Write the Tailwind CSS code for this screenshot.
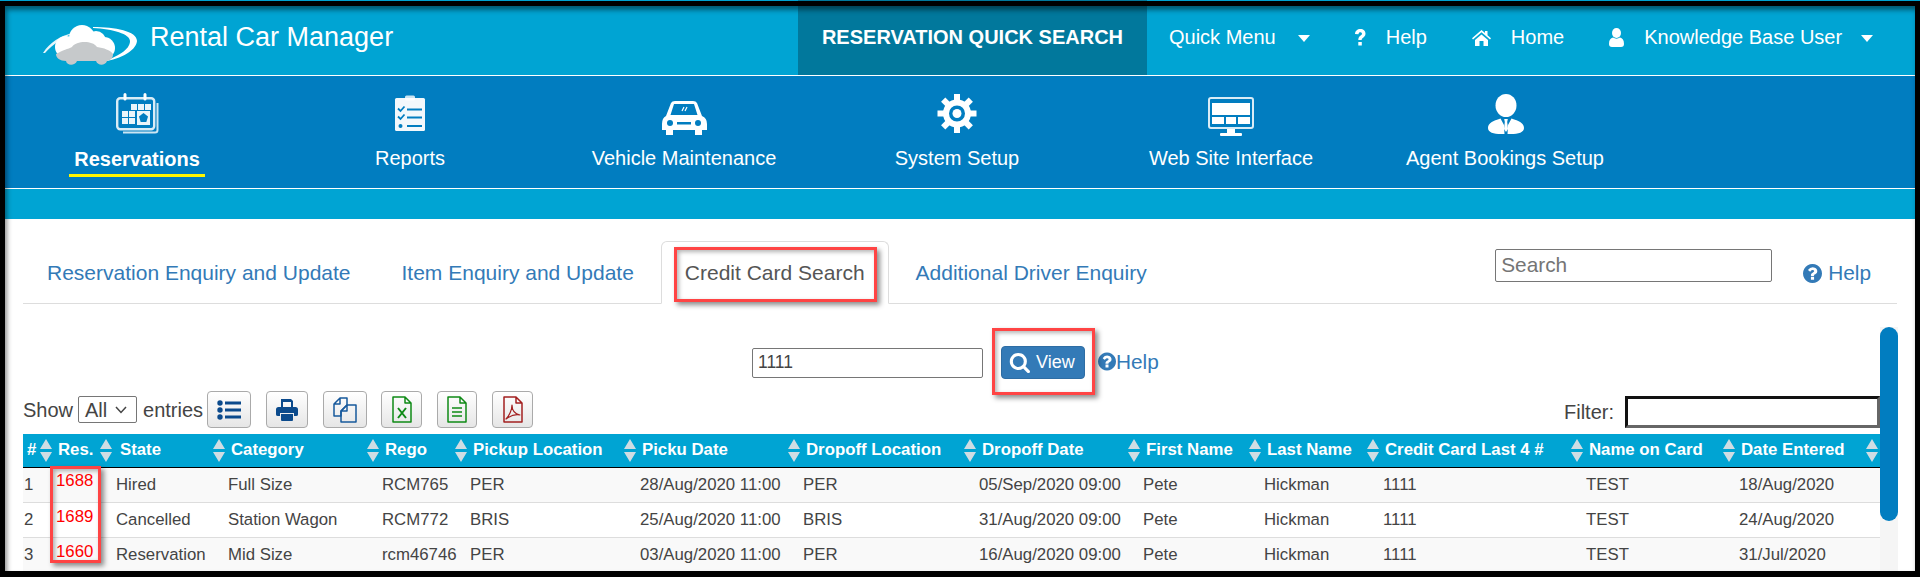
<!doctype html>
<html><head><meta charset="utf-8">
<script src="https://cdn.jsdelivr.net/npm/@tailwindcss/browser@4"></script>
</head>
<body class="bg-black overflow-hidden">
<div class="relative w-[1920px] h-[577px] bg-black font-['Liberation_Sans',Arial,sans-serif] overflow-hidden">
  <div class="h-px flex"><div class="w-[798px] bg-[#00a3d3]"></div><div class="w-[349px] bg-[#01789c]"></div><div class="flex-1 bg-[#00a3d3]"></div></div>
  <div class="ml-[5px] mr-[5px] mt-[5px] h-[565px] flex flex-col bg-white overflow-hidden relative">
    <!-- top bar -->
    <header class="h-[69px] shrink-0 bg-[#00a4d3] flex items-stretch text-white border-b border-white box-content">
      <div class="w-[145px] shrink-0 pl-[38px] pt-[19px]">
        <svg width="94" height="40" viewBox="0 0 94 40">
          <path d="M0 28 C7 17 17 11 30 8 C20 13 10 19 2 28 Z" fill="#fff" fill-opacity=".9"/>
          <path d="M50 2 C72 2 94 6 94 16 C93 27 74 35 58 37 C74 32 87 25 87 16 C87 9 70 4 50 3 Z" fill="#fff"/>
          <g fill="#fff"><circle cx="23" cy="22" r="11"/><circle cx="39" cy="13" r="13"/><circle cx="53" cy="16" r="10"/><circle cx="61" cy="23" r="11"/></g>
          <path d="M13 29 C20 25 25 24 29 22 C33 16 49 15 54 22 C61 23 67 25 70 29 C70 33 68 35 64 36 C62 41 55 41 53 36 L34 36 C32 41 24 41 23 36 C17 36 13 33 13 29 Z" fill="#c6c9cb"/>
        </svg>
      </div>
      <div class="w-[648px] shrink-0 text-[27px] leading-[32px] pt-[15px]">Rental Car Manager</div>
      <div class="w-[349px] shrink-0 bg-[#01789c] flex items-center justify-center font-bold text-[20px] pb-[7px]">RESERVATION QUICK SEARCH</div>
      <nav class="flex-1 flex items-center text-[20px] pb-[7px]">
        <span class="ml-[22px]">Quick Menu</span>
        <span class="ml-[22px] mt-[2px] w-0 h-0 border-x-[6px] border-x-transparent border-t-[7px] border-t-white"></span>
        <svg class="ml-[44px]" width="12" height="17" viewBox="0 0 11 17" fill="#fff"><path d="M0.500 5 C0.500 2 3 0 5.800 0 C9 0 11 2 11 4.800 C11 7 9.500 8 8.300 9 C7.300 9.800 7.200 10.300 7.200 11 L3.800 11 C3.800 9 4.300 8 5.500 7 C7 5.900 7.500 5.500 7.500 4.800 C7.500 3.800 6.800 3.200 5.800 3.200 C4.800 3.200 4.200 3.800 3.900 5.300 Z M3.800 13 H7.300 V16.500 H3.800 Z"/></svg>
        <span class="ml-[20px]">Help</span>
        <svg class="ml-[45px]" width="19" height="17" viewBox="0 0 19 17" fill="#fff"><path d="M9.500 1 L13 4 V2 H15.500 V6.200 L19 9.300 L18 10.500 L9.500 3.200 L1 10.500 L0 9.300 Z M3 11 L9.500 5.400 L16 11 V17 H11.500 V12 H7.500 V17 H3 Z"/></svg>
        <span class="ml-[20px]">Home</span>
        <svg class="ml-[45px]" width="15" height="19" viewBox="0 0 15 19" fill="#fff"><ellipse cx="7.500" cy="5" rx="4.500" ry="5"/><path d="M0 16 C0 12 1.500 10 4 9.500 C6 11 9 11 11 9.500 C13.500 10 15 12 15 16 C15 18 14 19 12 19 H3 C1 19 0 18 0 16 Z"/></svg>
        <span class="ml-[20px]">Knowledge Base User</span>
        <span class="ml-[19px] mt-[2px] w-0 h-0 border-x-[6px] border-x-transparent border-t-[7px] border-t-white"></span>
      </nav>
    </header>
    <!-- main menu -->
    <div class="h-[112px] shrink-0 bg-[#017dc0] border-b border-white box-content text-white text-[20px] flex">
      <div class="w-[264px] flex flex-col items-center">
        <svg class="mt-[16px]" width="50" height="46" viewBox="0 0 50 46" fill="none">
          <path d="M45.500 11 V38 A2.500 2.500 0 0 1 43 40.500 H11" stroke="#fff" stroke-opacity=".8" stroke-width="2"/>
          <rect x="5.200" y="6.200" width="37" height="31" rx="3" stroke="#fff" stroke-opacity=".85" stroke-width="2.400"/>
          <path d="M13 2.500 V7 M33 2.500 V7" stroke="#fff" stroke-width="3" stroke-linecap="round"/>
          <g fill="#fff" fill-opacity=".92"><rect x="19" y="12" width="6" height="6"/><rect x="26" y="12" width="6" height="6"/><rect x="33" y="12" width="6" height="6"/><rect x="10" y="19" width="6" height="6"/><rect x="17" y="19" width="6" height="6"/><rect x="10" y="26" width="6" height="6"/><rect x="17" y="26" width="6" height="6"/><rect x="25" y="19" width="13" height="14"/></g>
          <path d="M31.500 21 L36 24.500 L34.300 30 H28.700 L27 24.500 Z" fill="#017dc0"/>
        </svg>
        <div class="font-bold mt-[10px] leading-[22px]">Reservations</div>
        <div class="mt-[4px] w-[136px] h-[3px] bg-[#fff600]"></div>
      </div>
      <div class="w-[282px] flex flex-col items-center">
        <svg class="mt-[16px]" width="50" height="46" viewBox="0 0 50 46">
          <rect x="10" y="6" width="30" height="33" rx="1.500" fill="#fff" fill-opacity=".95"/>
          <rect x="20" y="3.500" width="10" height="5" rx="1.500" fill="#fff" fill-opacity=".8"/>
          <g stroke="#017dc0" stroke-width="1.800" fill="none"><path d="M22 17.500 H37 M22 25.500 H37 M22 34 H37"/><path d="M13 16.500 L15.500 19 L19.500 14.500 M13 24.500 L15.500 27 L19.500 22.500"/></g>
          <circle cx="15.500" cy="34" r="2" fill="#017dc0"/>
        </svg>
        <div class="mt-[9px] leading-[22px]">Reports</div>
      </div>
      <div class="w-[266px] flex flex-col items-center">
        <svg class="mt-[16px]" width="50" height="46" viewBox="0 0 50 46">
          <path fill="#fff" fill-rule="evenodd" d="M12 11 Q13 9 16 9 H34 Q37 9 38 11 L43 24 Q48 26 48 32 V38 H43 V43 H36 V38 H14 V43 H7 V38 H3 V32 Q3 26 7 24 Z M15 12 L11.500 23 H38.500 L35 12 Z"/>
          <path d="M23 19 L25 15 M26 19 L28 15" stroke="#fff" stroke-width="1.200"/>
          <circle cx="11" cy="31" r="3" fill="#017dc0"/><circle cx="39" cy="31" r="3" fill="#017dc0"/>
          <rect x="18" y="30" width="14" height="2.500" fill="#017dc0"/>
        </svg>
        <div class="mt-[9px] leading-[22px]">Vehicle Maintenance</div>
      </div>
      <div class="w-[280px] flex flex-col items-center">
        <svg class="mt-[16px]" width="50" height="46" viewBox="0 0 50 46">
          <g fill="#fff">
            <rect x="22" y="2" width="6" height="7"/><rect x="22" y="34" width="6" height="7"/>
            <rect x="22" y="2" width="6" height="7" transform="rotate(45 25 21.500)"/><rect x="22" y="34" width="6" height="7" transform="rotate(45 25 21.500)"/>
            <rect x="22" y="2" width="6" height="7" transform="rotate(90 25 21.500)"/><rect x="22" y="34" width="6" height="7" transform="rotate(90 25 21.500)"/>
            <rect x="22" y="2" width="6" height="7" transform="rotate(135 25 21.500)"/><rect x="22" y="34" width="6" height="7" transform="rotate(135 25 21.500)"/>
            <circle cx="25" cy="21.500" r="4.500"/>
          </g>
          <circle cx="25" cy="21.500" r="11" fill="none" stroke="#fff" stroke-width="6"/>
        </svg>
        <div class="mt-[9px] leading-[22px]">System Setup</div>
      </div>
      <div class="w-[268px] flex flex-col items-center">
        <svg class="mt-[16px]" width="50" height="46" viewBox="0 0 50 46">
          <rect x="3" y="6" width="44" height="30" rx="2" fill="none" stroke="#fff" stroke-opacity=".85" stroke-width="2"/>
          <g fill="#fff"><rect x="6" y="11" width="38" height="12"/><rect x="6" y="25" width="12" height="7"/><rect x="20" y="25" width="10" height="7"/><rect x="32" y="25" width="12" height="7"/><rect x="21" y="37" width="8" height="4"/><rect x="14" y="41" width="22" height="3" rx="1"/></g>
        </svg>
        <div class="mt-[9px] leading-[22px]">Web Site Interface</div>
      </div>
      <div class="w-[280px] flex flex-col items-center">
        <svg class="mt-[16px]" width="50" height="46" viewBox="0 0 50 46">
          <ellipse cx="26" cy="13.500" rx="10.500" ry="11.500" fill="#fff"/>
          <path d="M8 36 C8 31 13 29 20.500 26.500 L24 33 L24.500 42 C15 42.500 8 41 8 36 Z M44 36 C44 31 39 29 31.500 26.500 L28 33 L27.500 42 C37 42.500 44 41 44 36 Z" fill="#fff"/>
          <path d="M24.200 27 H27.800 L27.200 30 L28 37 L26 40 L24 37 L24.800 30 Z" fill="#fff"/>
        </svg>
        <div class="mt-[9px] leading-[22px]">Agent Bookings Setup</div>
      </div>
    </div>
    <div class="h-[30px] shrink-0 bg-[#00a4d3]"></div>
    <!-- content -->
    <main class="px-[18px] flex-1 text-[#444]">
      <div class="h-[85px] pt-[22px] border-b border-[#ddd] flex items-start text-[21px] text-[#337ab7]">
        <a class="h-[63px] px-[23px] mr-[3px] flex items-center border border-transparent whitespace-nowrap">Reservation Enquiry and Update</a>
        <a class="h-[63px] px-[23px] mr-[3px] flex items-center border border-transparent whitespace-nowrap">Item Enquiry and Update</a>
        <a class="h-[63px] px-[23px] mr-[3px] flex items-center border border-[#ddd] border-b-white rounded-t-[6px] text-[#555] whitespace-nowrap">Credit Card Search</a>
        <a class="h-[63px] px-[23px] flex items-center border border-transparent whitespace-nowrap">Additional Driver Enquiry</a>
        <div class="ml-auto flex items-start text-[20.8px]">
          <div class="mt-[8px] w-[277px] h-[33px] border border-[#767676] rounded-[2px] text-[#757575] pl-[5px] leading-[29px]">Search</div>
          <div class="ml-[31px] mr-[26px] mt-[20px] flex items-center leading-[24px]">
            <svg class="mr-[6px]" width="19" height="19" viewBox="0 128 1536 1536" fill="#337ab7"><path d="M896 1376v-192q0-14-9-23t-23-9h-192q-14 0-23 9t-9 23v192q0 14 9 23t23 9h192q14 0 23-9t9-23zm256-672q0-88-55.500-163t-138.500-116-170-41q-243 0-371 213-15 24 8 42l132 100q7 6 19 6 16 0 25-12 53-68 86-92 34-24 86-24 48 0 85.500 26t37.500 59q0 38-20 61t-68 45q-63 28-115.500 86.500t-52.500 125.500v36q0 14 9 23t23 9h192q14 0 23-9t9-23q0-19 21.500-49.500t54.500-49.500q32-18 49-28.500t46-35 44.500-48 28-60.500 12.500-81zm384 192q0 209-103 385.500t-279.500 279.500-385.500 103-385.500-103-279.500-279.500-103-385.500 103-385.500 279.500-279.500 385.500-103 385.500 103 279.500 279.500 103 385.500z"/></svg>
            <span>Help</span>
          </div>
        </div>
      </div>
      <div class="flex items-center ml-[729px] mt-[42px] h-[33px]">
        <div class="w-[231px] h-[30px] border border-[#767676] rounded-[2px] text-[17.5px] leading-[26px] pl-[5px] text-[#444]">1111</div>
        <div class="ml-[18px] w-[84px] h-[33px] bg-[#337ab7] border border-[#2e6da4] rounded-[4px] text-white text-[18px] flex items-center pl-[7px]">
          <svg class="mr-[6px]" width="21" height="22" viewBox="0 128 1728 1664" fill="#fff"><path d="M1216 832q0-185-131.500-316.500t-316.500-131.500-316.500 131.500-131.500 316.500 131.500 316.500 316.500 131.500 316.500-131.500 131.500-316.500zm512 832q0 52-38 90t-90 38q-54 0-90-38l-343-342q-179 124-399 124-143 0-273.500-55.500t-225-150-150-225-55.500-273.500 55.500-273.500 150-225 225-150 273.500-55.500 273.500 55.500 225 150 150 225 55.500 273.500q0 220-124 399l343 343q37 37 37 90z"/></svg>
          <span>View</span>
        </div>
        <div class="ml-[13px] pb-[2px] flex items-center text-[#337ab7] text-[20.8px]">
          <svg width="18" height="19" viewBox="0 128 1536 1536" fill="#337ab7"><path d="M896 1376v-192q0-14-9-23t-23-9h-192q-14 0-23 9t-9 23v192q0 14 9 23t23 9h192q14 0 23-9t9-23zm256-672q0-88-55.500-163t-138.500-116-170-41q-243 0-371 213-15 24 8 42l132 100q7 6 19 6 16 0 25-12 53-68 86-92 34-24 86-24 48 0 85.500 26t37.500 59q0 38-20 61t-68 45q-63 28-115.500 86.500t-52.500 125.500v36q0 14 9 23t23 9h192q14 0 23-9t9-23q0-19 21.500-49.500t54.500-49.500q32-18 49-28.500t46-35 44.500-48 28-60.500 12.500-81zm384 192q0 209-103 385.500t-279.500 279.500-385.500 103-385.500-103-279.500-279.500-103-385.500 103-385.500 279.500-279.500 385.500-103 385.500 103 279.500 279.500 103 385.500z"/></svg>
          <span>Help</span>
        </div>
      </div>
      <!-- toolbar -->
      <div class="mt-[12px] h-[37px] flex items-center text-[20px] w-[1857px]">
        <span>Show</span>
        <div class="ml-[5px] w-[59px] h-[27px] border border-[#767676] rounded-[2px] flex items-center pl-[6px] leading-none">All
          <svg class="ml-[8px]" width="12" height="8" viewBox="0 0 12 8" fill="none" stroke="#444" stroke-width="1.500"><path d="M1 1 L6 6.500 L11 1"/></svg>
        </div>
        <span class="ml-[6px]">entries</span>
        <div class="ml-[4px] w-[44px] h-[37px] flex items-center justify-center border border-[#aaa] rounded-[4px] bg-linear-to-b from-white to-[#e6e6e6]">
          <svg width="24" height="20" viewBox="0 0 24 20" fill="#0b4a8c"><circle cx="3" cy="3" r="2.700"/><circle cx="3" cy="10" r="2.700"/><circle cx="3" cy="17" r="2.700"/><rect x="8" y="1.500" width="16" height="3"/><rect x="8" y="8.500" width="16" height="3"/><rect x="8" y="15.500" width="16" height="3"/></svg>
        </div>
        <div class="ml-[15px] w-[42px] h-[37px] flex items-center justify-center border border-[#aaa] rounded-[4px] bg-linear-to-b from-white to-[#e6e6e6]">
          <svg width="22" height="22" viewBox="0 0 22 22" fill="#0b4a8c"><path fill-rule="evenodd" d="M5 0 H15 L17 2 V8 H15 V3 H7 V8 H5 Z M2.500 8 H19.500 Q22 8 22 10.500 V15.500 Q22 17 20 17 H18 V14 H4 V17 H2 Q0 17 0 15.500 V10.500 Q0 8 2.500 8 Z"/><path d="M5 15 H17 V21 Q17 22 16 22 H6 Q5 22 5 21 Z"/></svg>
        </div>
        <div class="ml-[15px] w-[44px] h-[37px] flex items-center justify-center border border-[#aaa] rounded-[4px] bg-linear-to-b from-white to-[#e6e6e6]">
          <svg width="24" height="27" viewBox="0 0 24 27" fill="none" stroke="#17599c" stroke-width="1.500" stroke-linejoin="round"><path d="M1 8 L7 2 H14 V9 L8 15 V20 H1 Z M7 2 V8 H1"/><path d="M8 15 L14 9 H23 V26 H8 Z M14 9 V15 H8"/></svg>
        </div>
        <div class="ml-[14px] w-[41px] h-[37px] flex items-center justify-center border border-[#aaa] rounded-[4px] bg-linear-to-b from-white to-[#e6e6e6]">
          <svg width="20" height="27" viewBox="0 0 20 27" fill="none" stroke="#0f8a16" stroke-width="1.500" stroke-linejoin="round"><path d="M1 1 H13 L19 7 V26 H1 Z M13 1 V7 H19"/><path d="M6 12 L14 22 M14 12 L6 22" stroke-width="2"/></svg>
        </div>
        <div class="ml-[15px] w-[40px] h-[37px] flex items-center justify-center border border-[#aaa] rounded-[4px] bg-linear-to-b from-white to-[#e6e6e6]">
          <svg width="20" height="27" viewBox="0 0 20 27" fill="none" stroke="#0f8a16" stroke-width="1.500" stroke-linejoin="round"><path d="M1 1 H13 L19 7 V26 H1 Z M13 1 V7 H19"/><path d="M5 12 H15 M5 16 H15 M5 20 H15"/></svg>
        </div>
        <div class="ml-[15px] w-[41px] h-[37px] flex items-center justify-center border border-[#aaa] rounded-[4px] bg-linear-to-b from-white to-[#e6e6e6]">
          <svg width="20" height="27" viewBox="0 0 20 27" fill="none" stroke="#a32020" stroke-width="1.500" stroke-linejoin="round"><path d="M1 1 H13 L19 7 V26 H1 Z M13 1 V7 H19"/><path d="M3 23 C6 20 9 14 9 9 C9 14 12 18 17 19 C12 18 7 20 3 23 Z" stroke-width="1.200"/></svg>
        </div>
        <span class="ml-auto mr-[11px] mt-[4px]">Filter:</span>
        <div class="mt-[4px] w-[255px] h-[32px] border-[3px] border-t-[#111] border-l-[#111] border-r-[#666] border-b-[#666]"></div>
      </div>
      <!-- table -->
      <table class="mt-[6px] w-[1857px] table-fixed border-collapse text-[16.8px]">
        <colgroup>
          <col class="w-[32px]"><col class="w-[60px]"><col class="w-[112px]"><col class="w-[154px]"><col class="w-[88px]"><col class="w-[170px]"><col class="w-[163px]"><col class="w-[176px]"><col class="w-[164px]"><col class="w-[121px]"><col class="w-[119px]"><col class="w-[203px]"><col class="w-[153px]"><col class="w-[142px]">
        </colgroup>
        <thead>
          <tr class="h-[33px] bg-[#00a4d3] text-white font-bold text-left">
            <th class="relative pl-[4px] pb-[1px] whitespace-nowrap">#<svg class="absolute right-[3px] top-[5px]" width="12" height="23" viewBox="0 0 12 23" fill="#cfdde3"><path d="M6 0 L12 10 H0 Z M6 23 L12 13 H0 Z"/></svg></th>
            <th class="relative pl-[3px] pb-[1px] whitespace-nowrap">Res.<svg class="absolute right-[3px] top-[5px]" width="12" height="23" viewBox="0 0 12 23" fill="#cfdde3"><path d="M6 0 L12 10 H0 Z M6 23 L12 13 H0 Z"/></svg></th>
            <th class="relative pl-[5px] pb-[1px] whitespace-nowrap">State<svg class="absolute right-[2px] top-[5px]" width="12" height="23" viewBox="0 0 12 23" fill="#cfdde3"><path d="M6 0 L12 10 H0 Z M6 23 L12 13 H0 Z"/></svg></th>
            <th class="relative pl-[4px] pb-[1px] whitespace-nowrap">Category<svg class="absolute right-[2px] top-[5px]" width="12" height="23" viewBox="0 0 12 23" fill="#cfdde3"><path d="M6 0 L12 10 H0 Z M6 23 L12 13 H0 Z"/></svg></th>
            <th class="relative pl-[4px] pb-[1px] whitespace-nowrap">Rego<svg class="absolute right-[2px] top-[5px]" width="12" height="23" viewBox="0 0 12 23" fill="#cfdde3"><path d="M6 0 L12 10 H0 Z M6 23 L12 13 H0 Z"/></svg></th>
            <th class="relative pl-[4px] pb-[1px] whitespace-nowrap">Pickup Location<svg class="absolute right-[3px] top-[5px]" width="12" height="23" viewBox="0 0 12 23" fill="#cfdde3"><path d="M6 0 L12 10 H0 Z M6 23 L12 13 H0 Z"/></svg></th>
            <th class="relative pl-[3px] pb-[1px] whitespace-nowrap">Picku Date<svg class="absolute right-[2px] top-[5px]" width="12" height="23" viewBox="0 0 12 23" fill="#cfdde3"><path d="M6 0 L12 10 H0 Z M6 23 L12 13 H0 Z"/></svg></th>
            <th class="relative pl-[4px] pb-[1px] whitespace-nowrap">Dropoff Location<svg class="absolute right-[2px] top-[5px]" width="12" height="23" viewBox="0 0 12 23" fill="#cfdde3"><path d="M6 0 L12 10 H0 Z M6 23 L12 13 H0 Z"/></svg></th>
            <th class="relative pl-[4px] pb-[1px] whitespace-nowrap">Dropoff Date<svg class="absolute right-[2px] top-[5px]" width="12" height="23" viewBox="0 0 12 23" fill="#cfdde3"><path d="M6 0 L12 10 H0 Z M6 23 L12 13 H0 Z"/></svg></th>
            <th class="relative pl-[4px] pb-[1px] whitespace-nowrap">First Name<svg class="absolute right-[2px] top-[5px]" width="12" height="23" viewBox="0 0 12 23" fill="#cfdde3"><path d="M6 0 L12 10 H0 Z M6 23 L12 13 H0 Z"/></svg></th>
            <th class="relative pl-[4px] pb-[1px] whitespace-nowrap">Last Name<svg class="absolute right-[3px] top-[5px]" width="12" height="23" viewBox="0 0 12 23" fill="#cfdde3"><path d="M6 0 L12 10 H0 Z M6 23 L12 13 H0 Z"/></svg></th>
            <th class="relative pl-[3px] pb-[1px] whitespace-nowrap">Credit Card Last 4 #<svg class="absolute right-[2px] top-[5px]" width="12" height="23" viewBox="0 0 12 23" fill="#cfdde3"><path d="M6 0 L12 10 H0 Z M6 23 L12 13 H0 Z"/></svg></th>
            <th class="relative pl-[4px] pb-[1px] whitespace-nowrap">Name on Card<svg class="absolute right-[3px] top-[5px]" width="12" height="23" viewBox="0 0 12 23" fill="#cfdde3"><path d="M6 0 L12 10 H0 Z M6 23 L12 13 H0 Z"/></svg></th>
            <th class="relative pl-[3px] pb-[1px] whitespace-nowrap">Date Entered<svg class="absolute right-[2px] top-[5px]" width="12" height="23" viewBox="0 0 12 23" fill="#cfdde3"><path d="M6 0 L12 10 H0 Z M6 23 L12 13 H0 Z"/></svg></th>
          </tr>
        </thead>
        <tbody class="[&_td]:pl-[1px] [&_td]:whitespace-nowrap">
          <tr class="h-[35px] bg-[#f9f9f9] border-t border-t-black"><td>1</td><td class="text-[#f00] pb-[8px]">1688</td><td>Hired</td><td>Full Size</td><td>RCM765</td><td>PER</td><td>28/Aug/2020 11:00</td><td>PER</td><td>05/Sep/2020 09:00</td><td>Pete</td><td>Hickman</td><td>1111</td><td>TEST</td><td>18/Aug/2020</td></tr>
          <tr class="h-[35px] bg-white border-t border-t-[#ddd]"><td>2</td><td class="text-[#f00] pb-[6px]">1689</td><td>Cancelled</td><td>Station Wagon</td><td>RCM772</td><td>BRIS</td><td>25/Aug/2020 11:00</td><td>BRIS</td><td>31/Aug/2020 09:00</td><td>Pete</td><td>Hickman</td><td>1111</td><td>TEST</td><td>24/Aug/2020</td></tr>
          <tr class="h-[35px] bg-[#f9f9f9] border-t border-t-[#ddd]"><td>3</td><td class="text-[#f00] pb-[6px]">1660</td><td>Reservation</td><td>Mid Size</td><td>rcm46746</td><td>PER</td><td>03/Aug/2020 11:00</td><td>PER</td><td>16/Aug/2020 09:00</td><td>Pete</td><td>Hickman</td><td>1111</td><td>TEST</td><td>31/Jul/2020</td></tr>
        </tbody>
      </table>
    </main>
    <!-- scrollbar over the content -->
    <div class="absolute left-[1875px] top-[321px] bottom-0 w-[18px] bg-[#f5f5f5]">
      <div class="h-[194px] rounded-[9px] bg-[#017dc0]"></div>
    </div>
    <!-- annotation boxes over the screenshot -->
    <div class="absolute left-[669px] top-[241px] w-[203px] h-[55px] border-[3px] border-[#ff4444] shadow-[3px_3px_5px_rgba(0,0,0,.45),inset_2px_2px_4px_rgba(0,0,0,.3)]"></div>
    <div class="absolute left-[987px] top-[322px] w-[103px] h-[67px] border-[3px] border-[#ff4444] shadow-[3px_3px_5px_rgba(0,0,0,.45),inset_2px_2px_4px_rgba(0,0,0,.3)]"></div>
    <div class="absolute left-[45px] top-[460px] w-[51px] h-[97px] border-[3px] border-[#ff4444] shadow-[3px_3px_5px_rgba(0,0,0,.45),inset_2px_2px_4px_rgba(0,0,0,.3)]"></div>
    <!-- edge shadow cast by the black frame -->
    <div class="absolute inset-0 pointer-events-none shadow-[inset_2px_4px_5px_rgba(0,0,0,.45)]"></div>
  </div>
</div>
</body></html>
